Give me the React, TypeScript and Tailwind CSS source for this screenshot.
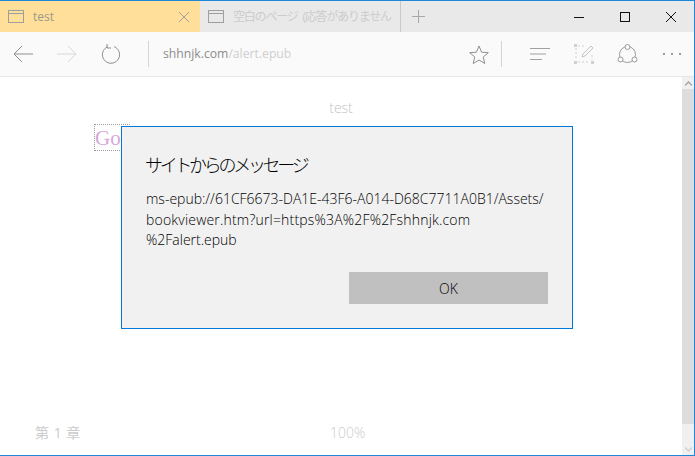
import { ReactNode } from 'react';

function Stroke({ w, h, children, className }: { w: number; h: number; children: ReactNode; className?: string }) {
  return (
    <svg width={w} height={h} viewBox={`0 0 ${w} ${h}`} fill="none" className={className}>
      {children}
    </svg>
  );
}

function TabIcon() {
  return (
    <Stroke w={16} h={13} className="shrink-0">
      <rect x="0.5" y="0.5" width="15" height="12" stroke="#9f9f9f" />
      <path d="M0 3.500h16" stroke="#9f9f9f" />
    </Stroke>
  );
}

export default function App() {
  return (
    <div className="relative flex h-[456px] w-[695px] flex-col overflow-hidden border-r border-b border-t border-[#1e88d8] bg-white font-['Open_Sans','Noto_Sans_CJK_JP',sans-serif]">
      {/* tab strip */}
      <div className="flex h-[31px] shrink-0 items-stretch bg-[#e9e9e9]">
        <div className="flex w-[200px] items-center bg-[#ffdf99] pl-[8px] pr-[11px]">
          <TabIcon />
          <span className="ml-[9px] flex-1 text-[12px] text-[#9a9a8a]">test</span>
          <Stroke w={10} h={10}>
            <path d="M0 0l10 10M10 0L0 10" stroke="#a0a0a0" />
          </Stroke>
        </div>
        <div className="flex w-[201px] items-center border-r border-[#c9c9c9] pl-[8px]">
          <TabIcon />
          <span className="ml-[9px] whitespace-nowrap text-[12px] tracking-[-1.200px] text-[#cccccc] [word-spacing:3px]">空白のページ (応答がありません</span>
        </div>
        <div className="flex w-[34px] items-center justify-center">
          <Stroke w={13} h={13}>
            <path d="M6.500 0v13M0 6.500h13" stroke="#a8a8a8" />
          </Stroke>
        </div>
        <div className="flex flex-1 items-center justify-end">
          <div className="flex w-[46px] justify-center">
            <Stroke w={10} h={10}><path d="M0 5.500h10" stroke="#111" /></Stroke>
          </div>
          <div className="flex w-[46px] justify-center">
            <Stroke w={10} h={10}><rect x="0.5" y="0.5" width="9" height="9" stroke="#111" /></Stroke>
          </div>
          <div className="flex w-[46px] justify-center">
            <Stroke w={10} h={10}><path d="M0 0l10 10M10 0L0 10" stroke="#111" /></Stroke>
          </div>
        </div>
      </div>

      {/* address bar */}
      <div className="flex h-[45px] shrink-0 items-center border-b border-[#e6e6e6] bg-[#fafafa] pl-[13px]">
        <Stroke w={20} h={18}>
          <path d="M20 9H1M9 1L1 9l8 8" stroke="#8f8f8f" />
        </Stroke>
        <Stroke w={20} h={18} className="ml-[24px]">
          <path d="M0 9h19M11 1l8 8-8 8" stroke="#d8d8d8" />
        </Stroke>
        <Stroke w={20} h={20} className="ml-[24px]">
          <path d="M7 2.600A8.600 8.600 0 1 0 13 2.600M6 0v4h4" stroke="#8f8f8f" />
        </Stroke>
        <div className="ml-[27px] h-[26px] w-px bg-[#d4d4d4]" />
        <span className="ml-[14px] text-[12.200px] text-[#8c8c8c]">
          shhnjk.com<span className="text-[#cfcfcf]">/alert.epub</span>
        </span>
        <div className="flex-1" />
        <Stroke w={20} h={19}>
          <path d="M10 1l2.600 6.200 6.700.5-5.100 4.300 1.600 6.500L10 15l-5.800 3.500 1.600-6.500L.7 7.700l6.700-.5z" stroke="#8f8f8f" />
        </Stroke>
        <div className="ml-[12px] h-[26px] w-px bg-[#d4d4d4]" />
        <Stroke w={20} h={14} className="ml-[28px]">
          <path d="M0 1.500h20M0 7h16M0 12.500h12" stroke="#a0a0a0" />
        </Stroke>
        <Stroke w={20} h={20} className="ml-[24px]">
          <path d="M2 4v12M18 11v5M4 2h7M4 18h12" stroke="#d0d0d0" strokeDasharray="2 2" />
          <path d="M8 13l1-3 8-8 2 2-8 8z" stroke="#c4c4c4" />
          <rect x="0" y="0" width="3" height="3" fill="#d0d0d0" />
          <rect x="0" y="17" width="3" height="3" fill="#d0d0d0" />
          <rect x="17" y="17" width="3" height="3" fill="#d0d0d0" />
        </Stroke>
        <Stroke w={21} h={20} className="ml-[23px]">
          <circle cx="10.500" cy="10.500" r="8" stroke="#9a9a9a" />
          <circle cx="10.500" cy="3" r="2.500" fill="#fafafa" stroke="#9a9a9a" />
          <circle cx="3.500" cy="15.500" r="2.500" fill="#fafafa" stroke="#9a9a9a" />
          <circle cx="17.500" cy="15.500" r="2.500" fill="#fafafa" stroke="#9a9a9a" />
        </Stroke>
        <div className="ml-[25px] mr-[13px] flex gap-[6px]">
          <span className="size-[2px] bg-[#9a9a9a]" />
          <span className="size-[2px] bg-[#9a9a9a]" />
          <span className="size-[2px] bg-[#9a9a9a]" />
        </div>
      </div>

      {/* reader page */}
      <div className="flex min-h-0 flex-1">
        <div className="flex flex-1 flex-col">
          <div className="pt-[22px] text-center text-[14px] leading-[18px] font-light text-[#c4c4c4]">test</div>
          <div className="ml-[94px] mt-[7px] h-[27px] w-[36px] border border-dotted border-[#999] font-['Liberation_Serif',serif] text-[21px] leading-[26px] text-[#d8a8d8]">
            Go
          </div>
          <div className="flex-1" />
          <div className="flex pb-[12px] text-[14px] leading-[20px] text-[#cccccc]">
            <span className="ml-[35px] w-[295px] [word-spacing:1px]">第 1 章</span>
            <span className="font-light">100%</span>
          </div>
        </div>
        <div className="flex w-[12px] flex-col bg-[#f0f0f0]">
          <div className="flex h-[12px] items-center justify-center">
            <Stroke w={7} h={5}><path d="M0 4.500L3.500 1 7 4.500" stroke="#a8a8a8" strokeWidth="1.500" /></Stroke>
          </div>
          <div className="h-[335px] bg-[#dddddd]" />
          <div className="flex-1" />
          <div className="flex h-[12px] items-center justify-center">
            <Stroke w={7} h={5}><path d="M0 .5L3.500 4 7 .5" stroke="#d0d0d0" strokeWidth="1.500" /></Stroke>
          </div>
        </div>
      </div>

      {/* alert dialog */}
      <div className="absolute left-[121px] top-[125px] flex h-[203px] w-[452px] flex-col border border-[#0078d7] bg-[#f1f1f1] pl-[23px] pr-[24px]">
        <div className="mt-[24px] text-[18px] leading-[28px] font-light tracking-[-3.300px] text-black">サイトからのメッセージ</div>
        <div className="mt-[10px] whitespace-nowrap pl-[1px] text-[14px] leading-[20.500px] font-light text-black">
          ms-epub://61CF6673-DA1E-43F6-A014-D68C7711A0B1/Assets/
          <br />
          <span className="tracking-[0.19px]">bookviewer.htm?url=https%3A%2F%2Fshhnjk.com</span>
          <br />
          %2Falert.epub
        </div>
        <div className="flex-1" />
        <div className="mb-[24px] flex h-[32px] w-[199px] items-center justify-center self-end bg-[#c0c0c0] text-[14px] font-light text-black">
          OK
        </div>
      </div>
    </div>
  );
}
